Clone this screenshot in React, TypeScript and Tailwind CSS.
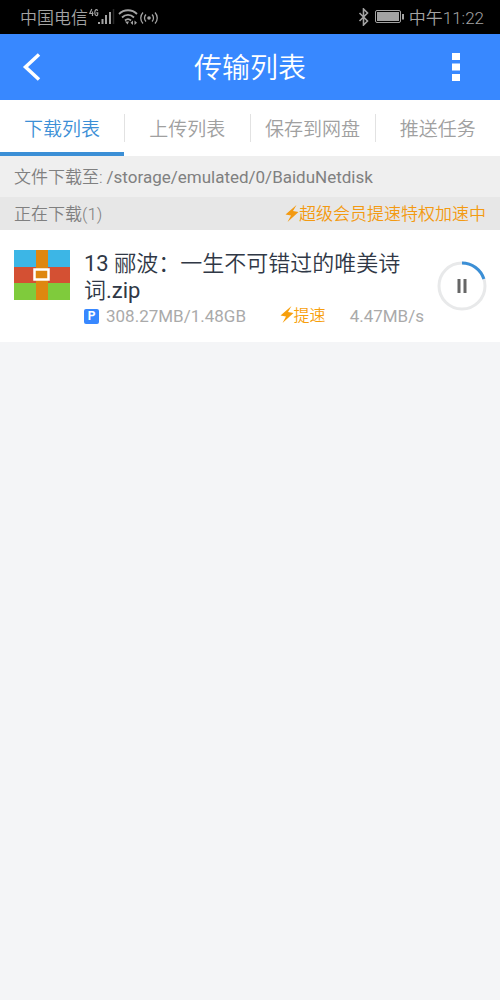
import { Fragment } from 'react';

const tabs = ['下载列表', '上传列表', '保存到网盘', '推送任务'];

const downloads = [
  {
    name: '13 郦波：一生不可错过的唯美诗词.zip',
    size: '308.27MB/1.48GB',
    speed: '4.47MB/s',
    progress: 0.2,
  },
];

const Bolt = () => (
  <svg viewBox="0 0 14 17" className="w-[14px] h-[17px] mb-[3px] shrink-0" fill="currentColor" aria-hidden="true">
    <path d="M11.500 0 .5 9.500l5.500 1L2.500 17 13.500 7 8 6z" />
  </svg>
);

const StatusBar = () => (
  <div className="flex items-center justify-between h-[34px] pl-5 pr-4 bg-black text-[#a3a3a3] text-[17px]">
    <div className="flex items-center">
      <span className="pt-[3px] font-light">中国电信</span>
      <svg viewBox="0 0 70 20" className="w-[70px] h-5" fill="none" stroke="currentColor" aria-hidden="true">
        <g strokeWidth="1.2">
          <path d="M3.800 2 1.800 6.500h3.700M4.500 4.500V9" />
          <path d="M9.500 3.800C9.200 1.800 6.800 2 6.800 5.500s2.700 4 2.900 1.800V5.800H8.300" />
        </g>
        <path d="M11 17v-2M14.500 17v-5M18 17V8M22 17V5" strokeWidth="2" />
        <path d="M25.500 17V2" strokeWidth="1.500" opacity="0.250" />
        <g strokeWidth="1.800">
          <path d="M31 7c5-5 13-5 18 0M34 10.500c3.500-3.500 8.500-3.500 12 0M37 13.500c2-1.800 4-1.800 6 0" />
        </g>
        <path d="m39.500 17.500-2.500-3h4z" fill="currentColor" stroke="none" />
        <path d="m45 13.500-2.500 2.300 2.500 2.300zM46.500 13.500l2.500 2.300-2.500 2.300z" fill="currentColor" stroke="none" />
        <g strokeWidth="1.300">
          <path d="M58 7.500c-2 2-2 5 0 7M55 5.500c-3 3.200-3 7.800 0 11M64 7.500c2 2 2 5 0 7M67 5.500c3 3.200 3 7.800 0 11" />
        </g>
        <circle cx="61" cy="11" r="1.800" fill="currentColor" stroke="none" />
      </svg>
    </div>
    <div className="flex items-center">
      <svg viewBox="0 0 48 18" className="w-12 h-[18px] mr-1" fill="none" stroke="currentColor" aria-hidden="true">
        <path d="m2.500 5 8 8-4 4V1l4 4-8 8" strokeWidth="1.600" />
        <rect x="18.500" y="2.500" width="25" height="12" rx="1.500" />
        <rect x="20" y="4" width="22" height="9" fill="currentColor" stroke="none" />
        <path d="M46 6v5.500" strokeWidth="2" />
      </svg>
      <span className="pt-[3px] font-light">中午11:22</span>
    </div>
  </div>
);

const Header = () => (
  <header className="grid grid-cols-[1fr_auto_1fr] items-center h-[66px] pl-5 pr-5 bg-[#3888ff] text-white">
    <button type="button" aria-label="返回" className="w-8">
      <svg viewBox="0 0 24 28" className="w-6 h-7" fill="none" stroke="currentColor" strokeWidth="3.500">
        <path d="M19 1.500 5.500 14 19 26.500" />
      </svg>
    </button>
    <h1 className="pt-1 text-[28px] font-light">传输列表</h1>
    <button type="button" aria-label="更多" className="justify-self-end pr-5">
      <svg viewBox="0 0 8 28" className="w-2 h-7" fill="currentColor">
        <path d="M0 0h8v7H0zM0 10.500h8v7H0zM0 21h8v7H0z" />
      </svg>
    </button>
  </header>
);

const Tabs = () => (
  <nav className="flex items-center h-14 bg-white text-[19px] font-light">
    {tabs.map((tab, index) => (
      <Fragment key={tab}>
        {index > 0 && <div className="w-px h-7 bg-[#e2e2e2]"></div>}
        <button
          type="button"
          className={`flex-1 h-14 border-b-4 pt-2 whitespace-nowrap ${
            index === 0 ? 'border-[#3b8fd6] text-[#3b8fd6]' : 'border-transparent text-[#a0a0a0]'
          }`}
        >
          {tab}
        </button>
      </Fragment>
    ))}
  </nav>
);

const ZipIcon = () => (
  <svg viewBox="0 0 56 50" className="w-14 h-[50px] mt-[6px] shrink-0" aria-hidden="true">
    <path d="M0 0h56v17H0z" fill="#3cb6e6" />
    <path d="M0 17h56v16H0z" fill="#d45033" />
    <path d="M0 33h56v17H0z" fill="#7fcb3c" />
    <path d="M22 0h12v50H22z" fill="#de8710" />
    <rect x="20.500" y="19.500" width="14" height="10" fill="#de8710" stroke="#fff" strokeWidth="2.500" />
  </svg>
);

const PauseButton = ({ progress }: { progress: number }) => (
  <button type="button" aria-label="暂停" className="self-start mt-[17px] shrink-0">
    <svg viewBox="0 0 50 50" className="w-[50px] h-[50px]" fill="none" strokeWidth="3">
      <circle cx="25" cy="25" r="23" stroke="#e8e9ea" />
      <circle
        cx="25"
        cy="25"
        r="23"
        stroke="#3b8fd6"
        pathLength="1"
        strokeDasharray={`${progress} 1`}
        transform="rotate(-90 25 25)"
      />
      <path d="M22 18v14M28 18v14" stroke="#666" />
    </svg>
  </button>
);

const App = () => {
  return (
    <div className="min-h-screen bg-[#f4f5f7] font-['Roboto','Noto_Sans_CJK_SC_DemiLight','Noto_Sans_CJK_SC',sans-serif]">
      <StatusBar />
      <Header />
      <Tabs />
      <p className="flex items-center h-[41px] px-[14px] pt-[3px] bg-[#efefef] text-[#808080] text-[17px]">
        <span className="font-light">文件下载至:</span>
        <span className="ml-1">/storage/emulated/0/BaiduNetdisk</span>
      </p>
      <div className="flex items-center justify-between h-[33px] px-[14px] pt-[3px] bg-[#e7e7e7] text-[17px]">
        <h2 className="text-[#808080] font-light">正在下载(1)</h2>
        <div className="flex items-center text-[#f39a12]">
          <Bolt />
          <span>超级会员提速特权加速中</span>
        </div>
      </div>
      <ul className="bg-white">
        {downloads.map((item) => (
          <li key={item.name} className="flex py-[14px] pl-[14px] pr-[13px]">
            <ZipIcon />
            <div className="flex-1 min-w-0 ml-[14px]">
              <h3 className="pt-[6px] text-[22px] leading-[27px] text-[#303846]">{item.name}</h3>
              <div className="flex items-center text-[17px] leading-6 text-[#aaaaaa]">
                <span className="flex items-center justify-center size-[15px] mr-[7px] rounded-xs bg-[#3888ff] text-white text-xs font-bold">
                  P
                </span>
                <span>{item.size}</span>
                <button type="button" className="flex items-center ml-auto text-base text-[#f79f0c]">
                  <Bolt />
                  提速
                </button>
                <span className="ml-6 mr-[13px]">{item.speed}</span>
              </div>
            </div>
            <PauseButton progress={item.progress} />
          </li>
        ))}
      </ul>
    </div>
  );
};

export default App;
